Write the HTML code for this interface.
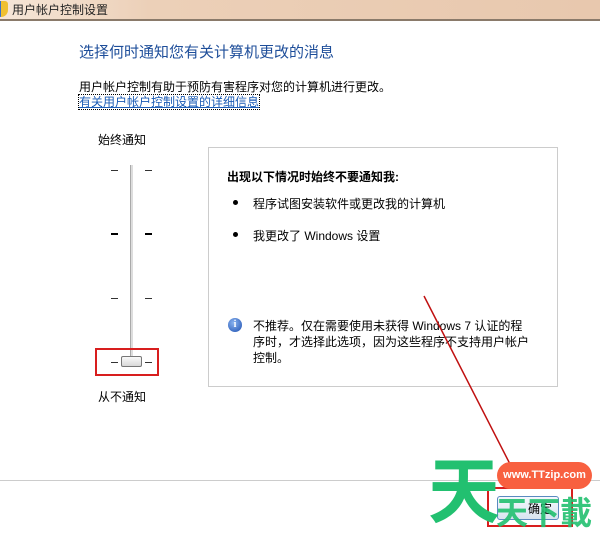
<!DOCTYPE html>
<html><head><meta charset="utf-8"><style>
*{margin:0;padding:0;box-sizing:border-box}
body{width:600px;height:531px;overflow:hidden;background:#fff;position:relative;font-family:"Liberation Sans","Noto Sans CJK SC",sans-serif;font-size:12px;color:#000}
.a{position:absolute;white-space:nowrap}
.tick{position:absolute;height:1px;width:7px;background:#333}
.tb{height:2px;background:#000}
</style></head><body>
<div class="a" style="left:0;top:0;width:600px;height:19px;background:linear-gradient(90deg,#f6e6d8 0%,#ecd0b8 25%,#e8c8ae 100%)"></div>
<div class="a" style="left:0;top:19px;width:600px;height:2px;background:#8a7a6a"></div>
<div class="a" style="left:-6px;top:1px;width:14px;height:16px;border-radius:3px 3px 7px 7px;background:linear-gradient(90deg,#3a6fc8 50%,#f0c030 50%)"></div>
<div class="a" style="left:12px;top:1px;font-size:12px;color:#222">用户帐户控制设置</div>

<div class="a" style="left:79px;top:41px;font-size:15px;color:#1e4e9a">选择何时通知您有关计算机更改的消息</div>
<div class="a" style="left:79px;top:78px;font-size:12px">用户帐户控制有助于预防有害程序对您的计算机进行更改。</div>
<div class="a" style="left:79px;top:95px;font-size:12px;line-height:14px;color:#1a5bb5;text-decoration:underline;outline:1px dotted #000">有关用户帐户控制设置的详细信息</div>

<div class="a" style="left:98px;top:131px">始终通知</div>
<div class="a" style="left:98px;top:388px">从不通知</div>
<div class="a" style="left:130px;top:165px;width:3px;height:196px;background:#ddd;border-left:1px solid #aaa"></div>
<div class="tick" style="left:111px;top:170px"></div><div class="tick" style="left:145px;top:170px"></div>
<div class="tick tb" style="left:111px;top:233px"></div><div class="tick tb" style="left:145px;top:233px"></div>
<div class="tick" style="left:111px;top:298px"></div><div class="tick" style="left:145px;top:298px"></div>
<div class="tick" style="left:111px;top:362px"></div><div class="tick" style="left:145px;top:362px"></div>
<div class="a" style="left:121px;top:356px;width:21px;height:11px;border:1px solid #777;border-radius:2px;background:linear-gradient(#fafafa,#d8d8d8)"></div>
<div class="a" style="left:95px;top:348px;width:64px;height:28px;border:2px solid #d81e1e"></div>

<div class="a" style="left:208px;top:147px;width:350px;height:240px;border:1px solid #ccc"></div>
<div class="a" style="left:227px;top:168px;font-weight:bold">出现以下情况时始终不要通知我:</div>
<div class="a" style="left:233px;top:200px;width:5px;height:5px;border-radius:50%;background:#000"></div>
<div class="a" style="left:253px;top:195px">程序试图安装软件或更改我的计算机</div>
<div class="a" style="left:233px;top:232px;width:5px;height:5px;border-radius:50%;background:#000"></div>
<div class="a" style="left:253px;top:227px">我更改了 Windows 设置</div>
<div class="a" style="left:228px;top:318px;width:14px;height:14px;border-radius:50%;background:radial-gradient(circle at 40% 35%,#8ab4f0,#1d4fb0);color:#fff;font-size:10px;font-weight:bold;text-align:center;line-height:14px;font-family:'Liberation Serif',serif">i</div>
<div class="a" style="left:253px;top:318px;line-height:16px">不推荐。仅在需要使用未获得 Windows 7 认证的程<br>序时，才选择此选项，因为这些程序不支持用户帐户<br>控制。</div>

<div class="a" style="left:0;top:480px;width:600px;height:1px;background:#ccc"></div>
<svg class="a" style="left:0;top:0" width="600" height="531"><line x1="424" y1="296" x2="511" y2="466" stroke="#c01010" stroke-width="1.5"/></svg>
<div class="a" style="left:497px;top:496px;width:62px;height:24px;border:1px solid #5a8ac0;border-radius:3px;background:linear-gradient(#f4f8fc,#d8e4f0)"></div>
<div class="a" style="left:528px;top:500px">确定</div>
<div class="a" style="left:487px;top:487px;width:86px;height:40px;border:2px solid #d81e1e"></div>

<div class="a" style="left:428px;top:448px;font-size:72px;font-weight:bold;color:#22c070;line-height:90px">天</div>
<div class="a" style="left:497px;top:462px;width:95px;height:27px;border-radius:14px;background:#f86040;color:#fff;font-weight:bold;font-size:11px;text-align:center;line-height:27px">www.TTzip.com</div>
<div class="a" style="left:496px;top:494px;font-size:32px;font-weight:bold;color:#22c070;line-height:38px;opacity:.9">天下載</div>
</body></html>
